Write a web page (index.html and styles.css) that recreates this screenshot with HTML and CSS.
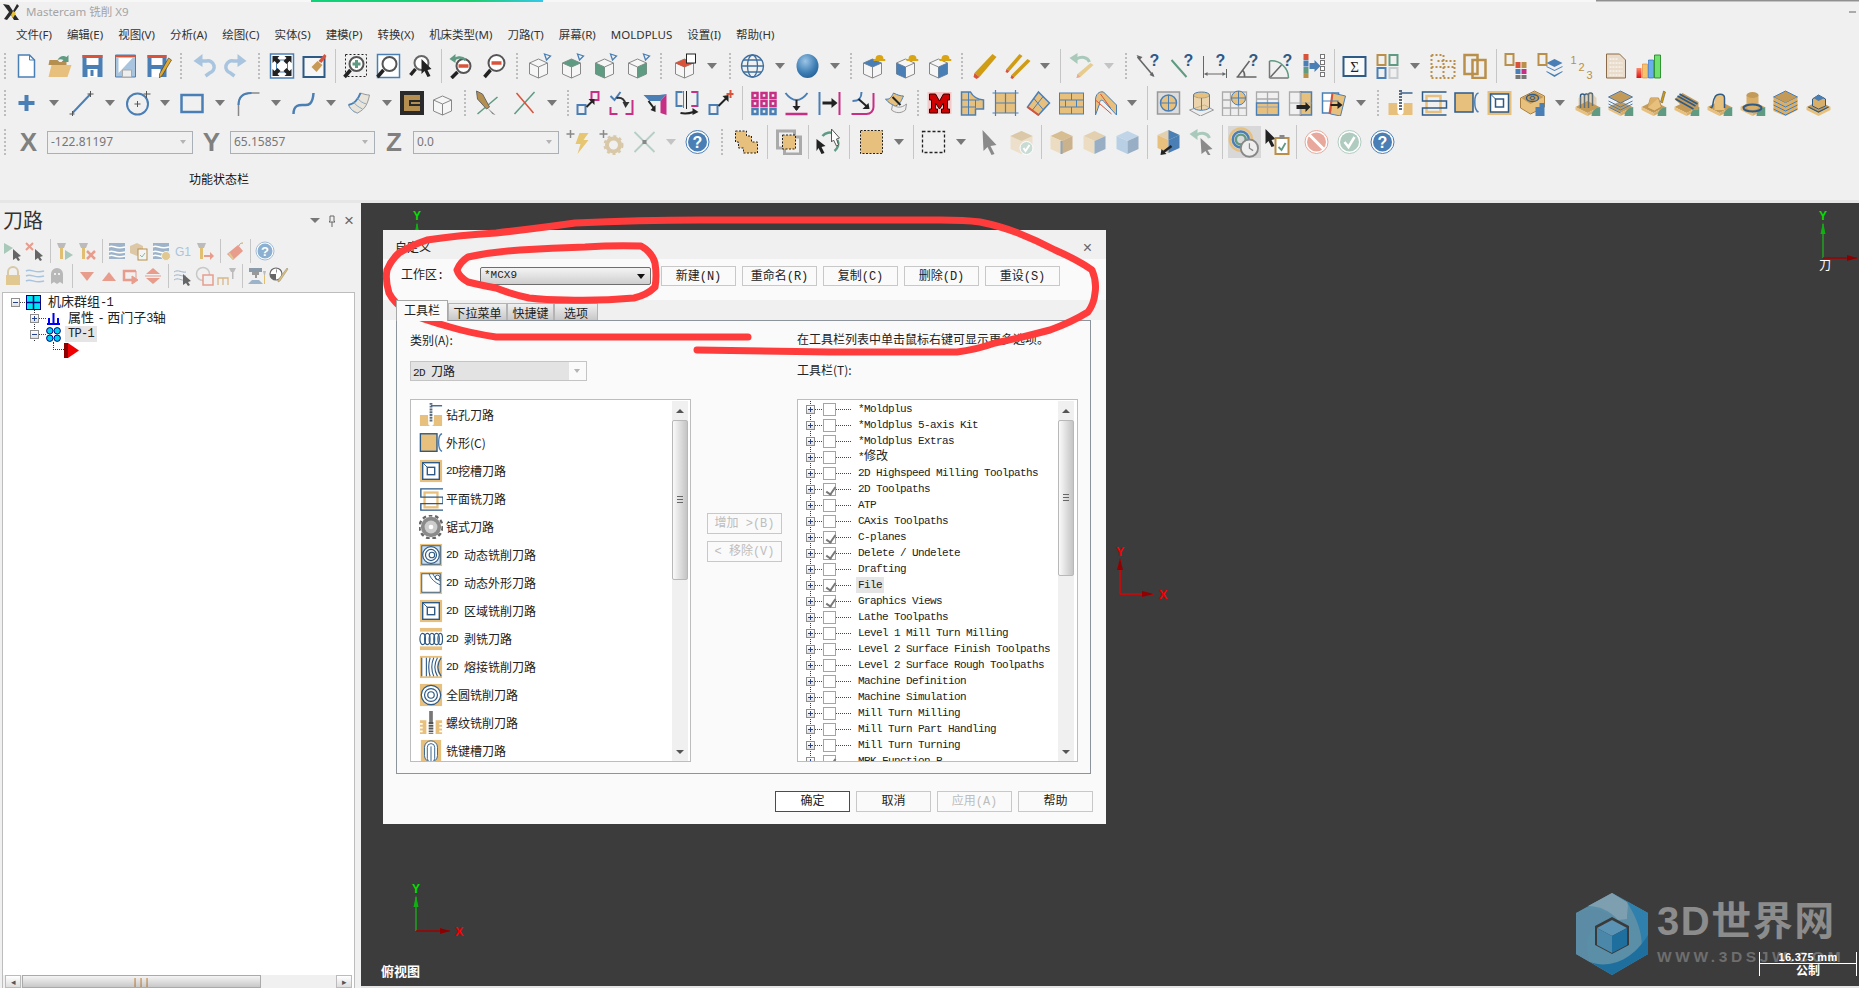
FILE: index.html
```html
<!DOCTYPE html>
<html lang="zh">
<head>
<meta charset="utf-8">
<title>Mastercam 铣削 X9</title>
<link rel="stylesheet" href="styles.css">
</head>
<body>
<svg class="sprite" xmlns="http://www.w3.org/2000/svg">
<defs>
<radialGradient id="gs" cx=".4" cy=".3" r=".8"><stop offset="0" stop-color="#9cc4e6"/><stop offset=".6" stop-color="#3f7fb5"/><stop offset="1" stop-color="#1f5a8e"/></radialGradient>
<linearGradient id="gb" x1="0" x2="0" y1="0" y2="1"><stop offset="0" stop-color="#ff8a6a"/><stop offset="1" stop-color="#e01010"/></linearGradient>
</defs>
<symbol id="new" viewBox="0 0 26 26"><path d="M5 2h11l5 5v17H5z" fill="#fff" stroke="#4a7fb5" stroke-width="1.5"/><path d="M16 2v5h5" fill="none" stroke="#4a7fb5"/></symbol>
<symbol id="open" viewBox="0 0 26 26"><path d="M2 12l1-5h8l2 2h7v3z" fill="#b48f4f"/><path d="M5 12h20l-4 12H2z" fill="#e8c07d"/><path d="M11 7c2-4 6-5 9-3l2-2v7h-7l2-2c-2-1-4-1-6 0z" fill="#5f9a82"/></symbol>
<symbol id="save" viewBox="0 0 26 26"><path d="M3 2h20v22H3z" fill="#4a7fb5"/><path d="M3 2h20v3H3z" fill="#d9533a"/><path d="M7 5h12v7H7z" fill="#fff"/><path d="M8 16h10v8H8z" fill="#fff"/><path d="M11 17h3v6h-3z" fill="#4a7fb5"/></symbol>
<symbol id="saveas" viewBox="0 0 26 26"><path d="M3 2h20v22H3z" fill="#a9c4de" stroke="#4a7fb5"/><path d="M3 2h20v2H3z" fill="#d9533a"/><path d="M6 5h14L6 20z" fill="#fff"/><path d="M10 17h9v7h-9z" fill="#eee" stroke="#aaa"/></symbol>
<symbol id="savep" viewBox="0 0 26 26"><path d="M2 2h19v22H2z" fill="#4a7fb5"/><path d="M2 2h19v3H2z" fill="#d9533a"/><path d="M6 5h11v7H6z" fill="#fff"/><path d="M6 16h9v8H6z" fill="#fff"/><path d="M23 5l3 2-9 15-3 3 0-4z" fill="#e0a92e" stroke="#333" stroke-width=".6"/></symbol>
<symbol id="undo" viewBox="0 0 26 26"><path d="M11 8h5a6 6 0 0 1 3 12l-4 3" fill="none" stroke="#a9c4de" stroke-width="3.5"/><path d="M12 1v13L3 8z" fill="#a9c4de"/></symbol>
<symbol id="redo" viewBox="0 0 26 26"><g transform="matrix(-1 0 0 1 26 0)"><path d="M11 8h5a6 6 0 0 1 3 12l-4 3" fill="none" stroke="#a9c4de" stroke-width="3.5"/><path d="M12 1v13L3 8z" fill="#a9c4de"/></g></symbol>
<symbol id="fit" viewBox="0 0 26 26"><rect x="2" y="1" width="23" height="24" fill="#fff" stroke="#4a7fb5" stroke-width="1.5"/><rect x="8" y="7" width="11" height="12" fill="none" stroke="#4a7fb5"/><path d="M4 3h7L9 5l3 3-3 3-3-3-2 2zM23 3v7l-2-2-3 3-3-3 3-3-2-2zM4 23v-7l2 2 3-3 3 3-3 3 2 2zM23 23h-7l2-2-3-3 3-3 3 3 2-2z" fill="#222"/></symbol>
<symbol id="paint" viewBox="0 0 26 26"><rect x="2" y="4" width="21" height="20" fill="#f6f6f6" stroke="#2e5a86" stroke-width="2"/><path d="M10 14l6-6 5 4-6 7z" fill="#c99a55"/><path d="M17 8l6-7 2 2-5 7z" fill="#d9533a"/></symbol>
<symbol id="zw" viewBox="0 0 26 26"><rect x="3" y="1.500" width="21" height="22" fill="none" stroke="#222" stroke-dasharray="2 2"/><circle cx="14" cy="11" r="7" fill="#fff" stroke="#555" stroke-width="2"/><path d="M14 7v8M10 11h8" stroke="#5f9a82" stroke-width="3"/><path d="M8 17l-6 7" stroke="#222" stroke-width="3.5"/></symbol>
<symbol id="zs" viewBox="0 0 26 26"><rect x="2" y="1.500" width="22" height="23" fill="#fff" stroke="#4a7fb5" stroke-width="1.5"/><circle cx="14" cy="11" r="7" fill="#fff" stroke="#555" stroke-width="2"/><path d="M8 17l-6 7" stroke="#222" stroke-width="3.500"/></symbol>
<symbol id="zc" viewBox="0 0 26 26"><circle cx="13" cy="10" r="7" fill="#fff" stroke="#666" stroke-width="2"/><path d="M7 16l-5 6" stroke="#222" stroke-width="3.500"/><path d="M13 6l10 10-4 1 3 6-3 1-3-6-3 3z" fill="#222"/></symbol>
<symbol id="zp" viewBox="0 0 26 26"><circle cx="15" cy="13" r="7" fill="#fff" stroke="#555" stroke-width="2"/><path d="M10 13h10" stroke="#d9533a" stroke-width="3.500"/><path d="M9 19l-6 6" stroke="#222" stroke-width="3.500"/><path d="M5 8c2-4 8-5 12-1" fill="none" stroke="#5f9a82" stroke-width="2.500"/><path d="M7 1v9L1 6z" fill="#5f9a82"/></symbol>
<symbol id="zo" viewBox="0 0 26 26"><circle cx="15" cy="10" r="8" fill="#fff" stroke="#555" stroke-width="2"/><path d="M10 10h10" stroke="#d9533a" stroke-width="3.500"/><path d="M9 17l-6 7" stroke="#222" stroke-width="3.500"/></symbol>
<symbol id="cw" viewBox="0 0 26 26"><path d="M13 6l9 4v11l-9 4-9-4V10z" fill="#f6f6f6" stroke="#888"/><path d="M4 10l9 4 9-4M13 14v11" stroke="#888" fill="none"/></symbol>
<symbol id="c1" viewBox="0 0 26 26"><use href="#cw"/><path d="M19 1l6 2-4 4z" fill="none" stroke="#4a7fb5" stroke-width="1.300"/></symbol>
<symbol id="c2" viewBox="0 0 26 26"><use href="#cw"/><path d="M13 6l9 4-9 4-9-4z" fill="#5f9a82"/><path d="M19 1l6 2-4 4z" fill="#f0f0f0" stroke="#4a7fb5" stroke-width="1.300"/></symbol>
<symbol id="c3" viewBox="0 0 26 26"><use href="#cw"/><path d="M4 10l9 4v11l-9-4z" fill="#5f9a82"/><path d="M19 1l6 2-4 4z" fill="#f0f0f0" stroke="#4a7fb5" stroke-width="1.300"/></symbol>
<symbol id="c4" viewBox="0 0 26 26"><use href="#cw"/><path d="M22 10l-9 4v11l9-4z" fill="#5f9a82"/><path d="M19 1l6 2-4 4z" fill="#f0f0f0" stroke="#4a7fb5" stroke-width="1.300"/></symbol>
<symbol id="cr" viewBox="0 0 26 26"><use href="#cw"/><path d="M13 6l9 4-9 4-9-4z" fill="#d9533a"/><path d="M4 10l9 4V8z" fill="#d9533a"/><rect x="15" y="1" width="9" height="9" fill="#fff" stroke="#222"/></symbol>
<symbol id="glb" viewBox="0 0 26 26"><g fill="none" stroke="#3f6f9f" stroke-width="1.300"><circle cx="13" cy="13" r="11"/><ellipse cx="13" cy="13" rx="5" ry="11"/><path d="M2 13h22M4 7h18M4 19h18"/></g></symbol>
<symbol id="sph" viewBox="0 0 26 26"><ellipse cx="13" cy="13" rx="11" ry="12" fill="url(#gs)"/></symbol>
<symbol id="hat" viewBox="0 0 26 26"><path d="M16 6a4 4 0 0 1 8 0h2v2H14V6z" fill="#d9a514"/></symbol>
<symbol id="h1" viewBox="0 0 26 26"><use href="#cw"/><path d="M13 6l9 4-9 4-9-4z" fill="#4a7fb5"/><use href="#hat"/></symbol>
<symbol id="h2" viewBox="0 0 26 26"><use href="#cw"/><path d="M4 10l9 4v11l-9-4z" fill="#4a7fb5"/><use href="#hat"/></symbol>
<symbol id="h3" viewBox="0 0 26 26"><use href="#cw"/><path d="M22 10l-9 4v11l9-4z" fill="#4a7fb5"/><use href="#hat"/></symbol>
<symbol id="pen" viewBox="0 0 26 26"><path d="M21 1l4 3L8 24l-5-4z" fill="#cf9c14"/><path d="M3 20l5 4-3 2-3-2z" fill="#d9533a"/></symbol>
<symbol id="pen2" viewBox="0 0 26 26"><path d="M15 1l3 2L5 18l-3-2z" fill="#cf9c14"/><path d="M23 6l3 2L10 24l-3-2z" fill="#cf9c14"/><path d="M2 16l3 2-2 2-2-1zM7 22l3 2-2 2-2-1z" fill="#d9533a"/></symbol>
<symbol id="upen" viewBox="0 0 26 26"><path d="M8 6c5-3 11-2 13 3" fill="none" stroke="#a9c9bb" stroke-width="3"/><path d="M9 0v11L1 5z" fill="#a9c9bb"/><path d="M22 10l3 2-13 12-4 1 1-4z" fill="#e6cd8f"/><path d="M8 25l1-4 3 3z" fill="#e8a8a0"/></symbol>
<symbol id="m1" viewBox="0 0 26 26"><path d="M2 4l16 19" stroke="#666" stroke-width="1.600"/><path d="M1 2l6 2-3 3zM19 24l-5-2 3-3z" fill="#666"/><text x="14" y="13" font-size="16" font-weight="700" fill="#2e5a86" font-family="Liberation Sans">?</text></symbol>
<symbol id="m2" viewBox="0 0 26 26"><path d="M3 7l15 17" stroke="#5f9a82" stroke-width="2"/><text x="15" y="13" font-size="16" font-weight="700" fill="#2e5a86" font-family="Liberation Sans">?</text></symbol>
<symbol id="m3" viewBox="0 0 26 26"><path d="M2 3v22M25 16v9M3 21h21" stroke="#666" fill="none"/><path d="M3 21l3-2v4zM24 21l-3-2v4z" fill="#666"/><text x="14" y="13" font-size="16" font-weight="700" fill="#2e5a86" font-family="Liberation Sans">?</text></symbol>
<symbol id="m4" viewBox="0 0 26 26"><path d="M2 24h20M3 24L15 8M10 24a8 8 0 0 0-2-7" stroke="#666" stroke-width="1.500" fill="none"/><text x="14" y="13" font-size="16" font-weight="700" fill="#2e5a86" font-family="Liberation Sans">?</text></symbol>
<symbol id="m5" viewBox="0 0 26 26"><path d="M2 25V8M2 25h19" stroke="#777" stroke-width="1.500"/><path d="M2 8a17 17 0 0 1 19 17" fill="none" stroke="#5f9a82" stroke-width="1.500"/><path d="M3 24L14 12" stroke="#666" stroke-width="1.500"/><text x="15" y="13" font-size="16" font-weight="700" fill="#2e5a86" font-family="Liberation Sans">?</text></symbol>
<symbol id="lst" viewBox="0 0 26 26"><path d="M3 1h5v6H3z" fill="#d9533a"/><path d="M3 7.500h5v6H3z" fill="#4a7fb5"/><path d="M3 14h5v6H3z" fill="#5f9a82"/><path d="M3 20h5v5H3z" fill="#b98f4a"/><path d="M9 10h5V7l6 6-6 6v-3H9z" fill="#4a7fb5"/><g fill="#fff" stroke="#777"><rect x="20" y="1.500" width="4" height="4"/><rect x="20" y="7.500" width="4" height="4"/><rect x="20" y="13.500" width="4" height="4"/><rect x="20" y="19.500" width="4" height="4"/></g></symbol>
<symbol id="sig" viewBox="0 0 26 26"><rect x="2" y="4" width="22" height="19" fill="#fafafa" stroke="#2e5a86" stroke-width="2"/><text x="13" y="19" text-anchor="middle" font-size="15" fill="#222" font-family="Liberation Serif">Σ</text></symbol>
<symbol id="vb" viewBox="0 0 26 26"><g fill="none" stroke-width="2"><rect x="3" y="2" width="8" height="10" stroke="#b98f4a"/><rect x="15" y="2" width="8" height="10" stroke="#5f9a82"/><rect x="3" y="15" width="8" height="10" stroke="#4a7fb5"/><rect x="15" y="15" width="8" height="10" stroke="#c7ccd0"/></g></symbol>
<symbol id="dts" viewBox="0 0 26 26"><g fill="none" stroke="#b98f4a" stroke-width="2" stroke-dasharray="2 2"><path d="M2 2h12M2 2v24M2 14h24M2 25h24M25 10v16M14 2v24M8 8h18"/></g></symbol>
<symbol id="ov" viewBox="0 0 26 26"><g fill="none" stroke="#b98f4a" stroke-width="2.500"><rect x="2" y="2" width="13" height="19"/><rect x="10" y="7" width="13" height="18"/></g></symbol>
<symbol id="colb" viewBox="0 0 26 26"><rect x="2" y="1" width="8" height="11" fill="none" stroke="#b98f4a" stroke-width="2"/><path d="M12 9h5v6h-5z" fill="#d9533a"/><path d="M18 9h5v6h-5z" fill="#b98f4a"/><path d="M12 16h5v5h-5z" fill="#4a7fb5"/><path d="M18 16h5v5h-5z" fill="#c62f84"/><path d="M12 22h5v4h-5z" fill="#777"/><path d="M18 22h5v4h-5z" fill="#777"/></symbol>
<symbol id="stk" viewBox="0 0 26 26"><rect x="2" y="1" width="8" height="11" fill="none" stroke="#b98f4a" stroke-width="2"/><path d="M18 6l8 4-8 4-8-4zM10 13l8 4 8-4v1l-8 4-8-4zM10 18l8 4 8-4v1l-8 5-8-5z" fill="#4a7fb5"/></symbol>
<symbol id="n123" viewBox="0 0 26 26"><g font-family="Liberation Sans" font-size="11" fill="#b98f4a"><text x="1" y="11">1</text><text x="9" y="18">2</text><text x="17" y="26">3</text></g></symbol>
<symbol id="doc" viewBox="0 0 26 26"><path d="M4 1h13l6 6v18H4z" fill="#eadccb" stroke="#8b6b47"/><path d="M7 6h8M7 10h13M7 14h13M7 18h13M7 22h13" stroke="#fff" stroke-dasharray="2 1"/></symbol>
<symbol id="chart" viewBox="0 0 26 26"><path d="M1 15h5v10H1z" fill="url(#gb)"/><path d="M7 11h5v14H7z" fill="#f5c46a" stroke="#e08030" stroke-width=".6"/><path d="M13 7h5v18h-5z" fill="#6ab0e8" stroke="#2060c0" stroke-width=".6"/><path d="M19 2h6v23h-6z" fill="#70e070" stroke="#108010" stroke-width=".8"/></symbol>
<symbol id="pls" viewBox="0 0 26 26"><path d="M13 5v16M5 13h16" stroke="#4a7fb5" stroke-width="4"/></symbol>
<symbol id="lin" viewBox="0 0 26 26"><path d="M4 23L22 4" stroke="#4a7fb5" stroke-width="2"/><path d="M22 1v6M19 4h6M4 21v5M1 24h5" stroke="#555"/></symbol>
<symbol id="cir" viewBox="0 0 26 26"><circle cx="13" cy="14" r="10.500" fill="none" stroke="#4a7fb5" stroke-width="2"/><path d="M13 11v6M10 14h6M22 1v7M19 4h7" stroke="#555"/></symbol>
<symbol id="rct" viewBox="0 0 26 26"><rect x="2" y="5" width="21" height="17" fill="none" stroke="#4a7fb5" stroke-width="2.500"/></symbol>
<symbol id="fil" viewBox="0 0 26 26"><path d="M3 26V15C3 7 8 3 16 3h8" fill="none" stroke="#888" stroke-width="1.500"/><path d="M3 15C3 7 8 3 16 3" fill="none" stroke="#4a7fb5" stroke-width="2"/></symbol>
<symbol id="spl" viewBox="0 0 26 26"><path d="M3 24c0-10 7-9 10-9s9 2 10-12" fill="none" stroke="#4a7fb5" stroke-width="2.500"/></symbol>
<symbol id="srf" viewBox="0 0 26 26"><path d="M3 15c5-1 9-4 12-12 3 1 6 2 9 2-2 9-4 14-12 18-3-1-6-2-9-8z" fill="#e9e4da" stroke="#999"/><path d="M3 15c5-1 9-4 12-12" fill="none" stroke="#4a7fb5" stroke-width="2"/><path d="M12 23c-3-1-6-2-9-8M8 12c2 3 5 5 9 7M12 8c2 3 5 5 9 6" fill="none" stroke="#8aa9c9"/></symbol>
<symbol id="elogo" viewBox="0 0 26 26"><rect x="1" y="1" width="24" height="24" fill="#2a2a2a"/><path d="M5 5h16v5H10v6h11v5H5z" fill="#b48f4f"/><path d="M12 12h9v2h-9z" fill="#b48f4f"/></symbol>
<symbol id="knf" viewBox="0 0 26 26"><path d="M3 24l20-17" stroke="#5f9a82" stroke-width="1.500"/><path d="M2 1l6 3 7 13-3 2L3 9z" fill="#b48f4f" stroke="#666"/><path d="M13 18l8 7-3-1z" fill="#777"/></symbol>
<symbol id="xln" viewBox="0 0 26 26"><path d="M3 24L23 2" stroke="#5f9a82" stroke-width="1.500"/><path d="M5 3l17 20" stroke="#d9533a" stroke-width="1.500"/></symbol>
<symbol id="t1" viewBox="0 0 26 26"><rect x="2" y="15" width="8" height="9" fill="none" stroke="#4a7fb5" stroke-width="2"/><rect x="16" y="2" width="7" height="8" fill="none" stroke="#c62f84" stroke-width="2"/><path d="M11 17l6-6" stroke="#222" stroke-width="2"/><path d="M19 9v6l-6-6z" fill="#222"/></symbol>
<symbol id="t2" viewBox="0 0 26 26"><path d="M2 6l4 4 6-8" fill="none" stroke="#4a7fb5" stroke-width="2"/><path d="M2 17v7h7M24 10v14h-7" fill="none" stroke="#c62f84" stroke-width="2"/><path d="M8 8c5-1 8 2 9 6" fill="none" stroke="#333" stroke-width="2"/><path d="M14 12h7l-4 6z" fill="#333"/></symbol>
<symbol id="t3" viewBox="0 0 26 26"><path d="M2 5h16l7-1-6 7H8z" fill="#4a7fb5"/><path d="M25 4v21l-6-2V11z" fill="#c62f84"/><path d="M7 11l6 8" stroke="#222" stroke-width="2"/><path d="M14 22l-5-2 5-5z" fill="#222"/></symbol>
<symbol id="t4" viewBox="0 0 26 26"><path d="M8 2H2v14h6M17 2h6v14h-6" fill="none" stroke="#4a7fb5" stroke-width="2"/><path d="M17 2h6M17 16h6" stroke="#c62f84" stroke-width="2"/><path d="M12 1v18" stroke="#222"/><path d="M9 1v17" stroke="#777"/><path d="M6 23c5 1 10 0 13-1" fill="none" stroke="#222" stroke-width="2"/><path d="M18 18l6 4-6 3z" fill="#222"/></symbol>
<symbol id="t5" viewBox="0 0 26 26"><rect x="2" y="15" width="8" height="9" fill="none" stroke="#4a7fb5" stroke-width="2"/><path d="M11 16l8-8" stroke="#222" stroke-width="2"/><path d="M21 5v7l-6-6z" fill="#222"/><path d="M23 0v8M19 4h7" stroke="#d9533a" stroke-width="2"/></symbol>
<symbol id="g1" viewBox="0 0 26 26"><g fill="none" stroke-width="2.500"><rect x="2" y="3" width="5" height="5" stroke="#c62f84"/><rect x="11" y="3" width="5" height="5" stroke="#c62f84"/><rect x="20" y="3" width="5" height="5" stroke="#c62f84"/><rect x="2" y="11" width="5" height="5" stroke="#c62f84"/><rect x="11" y="11" width="5" height="5" stroke="#c62f84"/><rect x="20" y="11" width="5" height="5" stroke="#c62f84"/><rect x="2" y="19" width="5" height="5" stroke="#4a7fb5"/><rect x="11" y="19" width="5" height="5" stroke="#4a7fb5"/><rect x="20" y="19" width="5" height="5" stroke="#4a7fb5"/></g></symbol>
<symbol id="g2" viewBox="0 0 26 26"><path d="M2 3c3 4 7 7 11 7s8-3 11-7" fill="none" stroke="#4a7fb5" stroke-width="2"/><path d="M13 10v10" stroke="#222" stroke-width="2"/><path d="M9 16h8l-4 5z" fill="#222"/><path d="M2 24h22" stroke="#c62f84" stroke-width="2.500"/></symbol>
<symbol id="g3" viewBox="0 0 26 26"><path d="M3 2v23" stroke="#4a7fb5" stroke-width="2"/><path d="M23 2v23" stroke="#c62f84" stroke-width="2"/><path d="M6 13h10" stroke="#222" stroke-width="3"/><path d="M15 8l6 5-6 5z" fill="#222"/></symbol>
<symbol id="g4" viewBox="0 0 26 26"><path d="M12 2c0 6-2 9-9 9" fill="none" stroke="#4a7fb5" stroke-width="2"/><path d="M24 3v14c0 4-3 7-7 7H2" fill="none" stroke="#c62f84" stroke-width="2"/><path d="M9 9l9 8" stroke="#222" stroke-width="2"/><path d="M20 19h-7l6-6z" fill="#222"/></symbol>
<symbol id="g5" viewBox="0 0 26 26"><path d="M3 9c4 1 6-2 8-6 4 2 7 3 10 3-2 4-3 8-8 10-3-1-7-3-10-7z" fill="#e8c07d" stroke="#4a7fb5"/><path d="M10 15c4 2 8 4 14-1l-1 6c-5 4-10 3-14 0z" fill="#eee" stroke="#999"/><path d="M10 7l8 8" stroke="#222" stroke-width="2"/></symbol>
<symbol id="mm" viewBox="0 0 26 26"><rect x="1" y="2" width="24" height="22" fill="#f2c8c8"/><path d="M3 4h6l4 7 4-7h6v6h-2v9h2v4h-8v-4h2v-6l-4 6-4-6v6h2v4H3v-4h2v-9H3z" fill="#d00000" stroke="#300" stroke-width="1"/></symbol>
<symbol id="a1" viewBox="0 0 26 26"><path d="M2 2h9c2 4 5 7 13 8v9h-8v6H2z" fill="#e8c07d" stroke="#4a7fb5" stroke-width="1.500"/><path d="M2 10h18M2 17h14M9 2v23M16 10v8" stroke="#4a7fb5" fill="none"/></symbol>
<symbol id="a2" viewBox="0 0 26 26"><rect x="3" y="3" width="20" height="20" fill="#e8c07d"/><path d="M0 3h26M0 23h26M3 0v26M23 0v26M13 3v20M3 13h20" stroke="#4a7fb5" stroke-width="1.200"/></symbol>
<symbol id="a3" viewBox="0 0 26 26"><path d="M13 2l11 11-11 12L2 17z" fill="#e8c07d" stroke="#4a7fb5" stroke-width="1.500"/><path d="M8 8l10 12M18 6L7 20" stroke="#4a7fb5"/><path d="M2 17l11 8" stroke="#d9533a" stroke-width="2"/></symbol>
<symbol id="a4" viewBox="0 0 26 26"><rect x="1" y="3" width="24" height="21" fill="#e8c07d" stroke="#4a7fb5"/><path d="M1 10h24M1 17h24M13 3v7M7 10v7M18 10v7M13 17v7" stroke="#4a7fb5"/></symbol>
<symbol id="a5" viewBox="0 0 26 26"><path d="M4 25V10C4 4 8 1 12 2l13 13v10L13 12C10 9 8 10 8 14z" fill="#e8c07d" stroke="#4a7fb5"/><path d="M4 25V10M9 4l10 14M4 10l16 14" stroke="#d9533a"/></symbol>
<symbol id="b1" viewBox="0 0 26 26"><rect x="2" y="2" width="22" height="22" fill="#ddd" stroke="#999" stroke-width="1.500"/><circle cx="13" cy="13" r="8" fill="#e8c07d" stroke="#4a7fb5" stroke-width="1.500"/><path d="M13 5v16M5 13h16" stroke="#4a7fb5"/></symbol>
<symbol id="b2" viewBox="0 0 26 26"><path d="M1 20l15-5 9 5-13 6z" fill="#eee" stroke="#999"/><ellipse cx="13" cy="5" rx="8" ry="3" fill="#e8c07d" stroke="#4a7fb5"/><path d="M5 5v13c3 3 12 3 16 0V5" fill="#e8c07d" fill-opacity=".6" stroke="#4a7fb5"/><path d="M13 8v12" stroke="#4a7fb5"/></symbol>
<symbol id="b3" viewBox="0 0 26 26"><path d="M1 2h24v24H1z" fill="#eee"/><path d="M1 2h24v24H1zM1 10h24M1 18h24M9 2v24M17 2v24" fill="none" stroke="#aaa" stroke-width="1.300"/><circle cx="17" cy="8" r="7" fill="#e8c07d" stroke="#4a7fb5"/><path d="M17 1v14M10 8h14" stroke="#4a7fb5"/></symbol>
<symbol id="b4" viewBox="0 0 26 26"><path d="M2 2h22v23H2z" fill="#f0f0f0"/><path d="M2 13h22v12H2z" fill="#e8c07d"/><path d="M2 2h22v23H2zM2 9h22M2 17h22M13 2v23" fill="none" stroke="#aaa" stroke-width="1.300"/><path d="M2 13h22v12H2z" fill="none" stroke="#4a7fb5" stroke-width="1.300"/></symbol>
<symbol id="b5" viewBox="0 0 26 26"><path d="M2 2h12v23H2z" fill="#f0f0f0" stroke="#aaa" stroke-width="1.300"/><path d="M13 2h11v23H13z" fill="#e8c07d" stroke="#4a7fb5" stroke-width="1.500"/><path d="M2 13h22M13 2v23" stroke="#aaa"/><path d="M9 15h9v-3l5 5-5 5v-3H9z" fill="#222"/></symbol>
<symbol id="b6" viewBox="0 0 26 26"><path d="M2 3h16v20H2z" fill="#fff" stroke="#4a7fb5" stroke-width="1.500"/><path d="M12 3l13 3-5 20-10-2z" fill="#e8c07d" stroke="#4a7fb5"/><path d="M12 3l-3 21" stroke="#d9533a" stroke-width="2"/><path d="M2 11h16" stroke="#4a7fb5"/><path d="M10 14h7v-3l5 4-5 4v-3h-7z" fill="#222"/></symbol>
<symbol id="drl" viewBox="0 0 26 26"><path d="M1 13h9v5h6v-5h9v12H1z" fill="#e8c07d"/><path d="M10 10a3 3 0 0 0 0 0v12a3 3 0 0 0 6 0V10z" fill="#fff"/><path d="M13 0v21" stroke="#5a6d80" stroke-width="3" stroke-dasharray="2 1"/><path d="M13 3h12" stroke="#2e5a86" stroke-width="1.400"/></symbol>
<symbol id="fac" viewBox="0 0 26 26"><rect x="6" y="6" width="14" height="16" fill="none" stroke="#e8c07d" stroke-width="2.500"/><path d="M26 2H2v9h24v7H2v7h24" fill="none" stroke="#2e5a86" stroke-width="1.500"/></symbol>
<symbol id="con" viewBox="0 0 26 26"><rect x="1.500" y="3" width="18" height="19" fill="#e8c07d" stroke="#2e5a86" stroke-width="1.500"/><path d="M25 3c-5 1-5 17 0 19" fill="none" stroke="#4a7fb5" stroke-width="1.500"/></symbol>
<symbol id="poc" viewBox="0 0 26 26"><rect x="1" y="1" width="24" height="24" fill="#e8c07d"/><rect x="4" y="4" width="18" height="18" fill="#fff" stroke="#2e5a86" stroke-width="1.500"/><rect x="9" y="9" width="8" height="8" fill="none" stroke="#2e5a86" stroke-width="1.500"/><path d="M4 4l5 5" stroke="#2e5a86"/></symbol>
<symbol id="spi" viewBox="0 0 26 26"><path d="M1 8l14-7 10 5v11L11 24 1 18z" fill="#e8c07d" stroke="#a98040"/><path d="M2 8l13-6 9 5-13 7z" fill="#c49a58"/><ellipse cx="13" cy="8" rx="6" ry="3.500" fill="none" stroke="#2e5a86" stroke-width="1.300"/><ellipse cx="13" cy="8" rx="2.500" ry="1.500" fill="none" stroke="#2e5a86"/><path d="M16 17h4v-4h5v13h-9z" fill="#4a7fb5"/></symbol>
<symbol id="blk" viewBox="0 0 26 26"><path d="M1 17l12-6 12 6-12 6z" fill="#c49a58"/><path d="M1 17v3l12 6v-3z" fill="#e8c07d"/><path d="M25 17v3l-12 6v-3z" fill="#d8ae68"/><path d="M26 26h-9a9 9 0 0 1 9-9z" fill="#5f9a82"/></symbol>
<symbol id="k1" viewBox="0 0 26 26"><use href="#blk"/><path d="M6 18V6a2 2 0 0 1 4 0v12V6a2 2 0 0 1 4 0v12V5a2 2 0 0 1 4 0v11" fill="none" stroke="#2e5a86" stroke-width="1.500"/><path d="M4 19V8l12-6 6 6v9z" fill="#c49a58" opacity=".35"/></symbol>
<symbol id="k2" viewBox="0 0 26 26"><use href="#blk"/><path d="M1 7l12-6 12 6-12 6z" fill="#c49a58" stroke="#4a7fb5"/><path d="M1 11l12 6 12-6M1 14l12 6 12-6M1 17l12 6" fill="none" stroke="#4a7fb5"/></symbol>
<symbol id="k3" viewBox="0 0 26 26"><use href="#blk"/><path d="M7 18l3-10h8l3 9-7 4z" fill="#e8c07d" stroke="#b98f4a"/><path d="M7 18l3-10 8 0" fill="#d8ae68"/><path d="M23 1l2 1-3 11-2-1z" fill="#cf9c14" stroke="#333" stroke-width=".4"/></symbol>
<symbol id="k4" viewBox="0 0 26 26"><use href="#blk"/><path d="M1 9l8-6 16 9v8L13 20z" fill="#c49a58"/><path d="M4 6l18 10M6 4l18 10M2 9l18 10" stroke="#2e5a86" stroke-width="1.500"/></symbol>
<symbol id="k5" viewBox="0 0 26 26"><use href="#blk"/><path d="M8 20V8c0-5 10-5 10 0v12z" fill="#e8c07d"/><path d="M4 17c3 3 2-7 4-9 2-5 10-5 10 0v10" fill="none" stroke="#2e5a86" stroke-width="1.500"/></symbol>
<symbol id="k6" viewBox="0 0 26 26"><use href="#blk"/><path d="M7 5v12c0 4 12 4 12 0V5z" fill="#d8ae68"/><ellipse cx="13" cy="5" rx="6" ry="3" fill="#c49a58"/><ellipse cx="13" cy="18" rx="9" ry="3.500" fill="none" stroke="#2e5a86" stroke-width="2"/></symbol>
<symbol id="k7" viewBox="0 0 26 26"><path d="M1 7l12-6 12 6-12 6z" fill="#c49a58" stroke="#4a7fb5"/><path d="M1 7v14l12 5 12-6V7l-12 6z" fill="#d8ae68"/><path d="M1 11l12 6 12-6M1 15l12 6 12-6M1 19l12 6 12-6" fill="none" stroke="#4a7fb5"/></symbol>
<symbol id="k8" viewBox="0 0 26 26"><path d="M1 17l12-6 12 6-12 6z" fill="#c49a58"/><path d="M1 17v3l12 6 12-6v-3l-12 6z" fill="#e8c07d"/><path d="M7 9l6-4 7 4v7l-7 3-6-3z" fill="#d8ae68" stroke="#2e5a86"/><path d="M8 8l5-3 6 3-6 3z" fill="#4a7fb5"/><path d="M3 17l10 5 10-5" fill="none" stroke="#2e5a86" stroke-width="1.300"/></symbol>
<symbol id="bolt" viewBox="0 0 26 26"><path d="M1 5h8M5 1v8" stroke="#888" stroke-width="1.500"/><path d="M14 4h9l-5 7h5L12 25l3-10h-5z" fill="#e6c670"/></symbol>
<symbol id="gear" viewBox="0 0 26 26"><path d="M1 5h8M5 1v8" stroke="#888" stroke-width="1.500"/><circle cx="15" cy="16" r="6.500" fill="none" stroke="#d8c8a8" stroke-width="4"/><circle cx="15" cy="16" r="9" fill="none" stroke="#d8c8a8" stroke-width="2" stroke-dasharray="3 3"/></symbol>
<symbol id="xg" viewBox="0 0 26 26"><path d="M3 3l20 20M23 3L3 23" stroke="#b5cfc4" stroke-width="1.800"/><rect x="11" y="11" width="4" height="4" fill="#888"/></symbol>
<symbol id="hlp" viewBox="0 0 26 26"><circle cx="13" cy="13" r="11.500" fill="#fff" stroke="#4a7fb5"/><circle cx="13" cy="13" r="9.500" fill="#4a7fb5"/><text x="13" y="19" text-anchor="middle" font-size="16" font-weight="700" fill="#fff" font-family="Liberation Sans">?</text></symbol>
<symbol id="tn1" viewBox="0 0 26 26"><path d="M2 2h11v5h5v6h6v11H10v-5H5v-6H2z" fill="#e8c07d" stroke="#222" stroke-dasharray="2 1.500"/></symbol>
<symbol id="tn2" viewBox="0 0 26 26"><rect x="2" y="2" width="17" height="17" fill="none" stroke="#aaa" stroke-width="3"/><rect x="9" y="8" width="16" height="17" fill="#f0f0f0" stroke="#aaa" stroke-width="3"/><rect x="7" y="6" width="13" height="14" fill="#e8c07d" stroke="#222" stroke-dasharray="2 1.500"/></symbol>
<symbol id="cyc" viewBox="0 0 26 26"><path d="M7 7a9 9 0 0 1 12-2M19 22a9 9 0 0 0 3-11" fill="none" stroke="#5f9a82" stroke-width="2.500"/><path d="M1 10l9 7-4 1 3 6-3 1-3-6-2 3z" fill="#222"/><path d="M16 0l8 9-3 1 2 6-2 1-3-6-2 2z" fill="#fff" stroke="#555"/></symbol>
<symbol id="tn3" viewBox="0 0 26 26"><rect x="2" y="1.500" width="22" height="23" fill="#e8c07d" stroke="#222" stroke-dasharray="2 1.500"/></symbol>
<symbol id="dsh" viewBox="0 0 26 26"><rect x="2" y="2.500" width="22" height="21" fill="none" stroke="#222" stroke-width="1.300" stroke-dasharray="3 2"/></symbol>
<symbol id="arw" viewBox="0 0 26 26"><path d="M7 1l14 15-6 1 4 8-3 1-4-8-4 4z" fill="#8a8a8a"/></symbol>
<symbol id="tck" viewBox="0 0 26 26"><path d="M13 2l11 5v13l-11 5-11-5V7z" fill="#ece0cc"/><path d="M2 7l11 5 11-5-11-5z" fill="#dbc8a8"/><circle cx="18" cy="19" r="6.500" fill="#c9dcd4" stroke="#fff"/><path d="M15 19l2 3 4-6" fill="none" stroke="#fff" stroke-width="2"/></symbol>
<symbol id="q1" viewBox="0 0 26 26"><path d="M13 2l11 5-11 5L2 7z" fill="#d7bd92"/><path d="M2 7l11 5v13L2 20z" fill="#ecdcc2"/><path d="M24 7l-11 5v13l11-5z" fill="#cab28c"/><path d="M12 12h2v13h-2z" fill="#8fa6bd"/></symbol>
<symbol id="q2" viewBox="0 0 26 26"><path d="M13 2l11 5-11 5L2 7z" fill="#e2d0b0"/><path d="M2 7l11 5v13L2 20z" fill="#ecdcc2"/><path d="M24 7l-11 5v13l11-5z" fill="#98aec4"/></symbol>
<symbol id="q3" viewBox="0 0 26 26"><path d="M13 2l11 5-11 5L2 7z" fill="#c0d5e8"/><path d="M2 7l11 5v13L2 20z" fill="#b8cfe4"/><path d="M24 7l-11 5v13l11-5z" fill="#98aec4"/></symbol>
<symbol id="q4" viewBox="0 0 26 26"><path d="M13 1l11 5-11 5L2 6z" fill="#e2d0b0"/><path d="M2 6l11 5v13L2 19z" fill="#e8c07d"/><path d="M24 6l-11 5v13l11-5z" fill="#4a7fb5"/><path d="M13 1l11 5-11 5z" fill="#4a7fb5"/><path d="M16 17l-8 6" stroke="#222" stroke-width="2.500"/><path d="M5 26l1-6 5 5z" fill="#222"/></symbol>
<symbol id="uar" viewBox="0 0 26 26"><path d="M8 6c5-3 11-2 13 3" fill="none" stroke="#a9c9bb" stroke-width="3"/><path d="M9 0v11L1 5z" fill="#a9c9bb"/><path d="M12 9l12 11-5 1 3 5-2 1-3-5-4 3z" fill="#8a8a8a"/></symbol>
<symbol id="tgt" viewBox="0 0 26 26"><g fill="none"><circle cx="10" cy="11" r="9" stroke="#e8c07d" stroke-width="2"/><circle cx="10" cy="11" r="6.500" stroke="#4a7fb5" stroke-width="2"/><circle cx="10" cy="11" r="4" stroke="#5f9a82" stroke-width="2"/></g><circle cx="17" cy="18" r="7" fill="#eee" stroke="#888" stroke-width="1.500"/><path d="M17 14v4l3 2" fill="none" stroke="#888"/></symbol>
<symbol id="clp" viewBox="0 0 26 26"><path d="M1 0l10 10-4 1 3 6-3 1-3-6-3 3z" fill="#222"/><rect x="11" y="9" width="13" height="16" fill="#fff" stroke="#b98f4a" stroke-width="2"/><rect x="15" y="6" width="5" height="4" fill="#888"/><path d="M14 18l3 3 4-7" fill="none" stroke="#5f9a82" stroke-width="1.800"/></symbol>
<symbol id="no" viewBox="0 0 26 26"><circle cx="13" cy="13" r="11.500" fill="#fff" stroke="#e8a89c"/><circle cx="13" cy="13" r="9.500" fill="#e8a89c"/><path d="M6 6l14 14" stroke="#fff" stroke-width="3"/></symbol>
<symbol id="ok" viewBox="0 0 26 26"><circle cx="13" cy="13" r="11.500" fill="#fff" stroke="#b0cbc0"/><circle cx="13" cy="13" r="9.500" fill="#b0cbc0"/><path d="M8 13l4 5 6-10" fill="none" stroke="#fff" stroke-width="2.500"/></symbol>
<symbol id="saw" viewBox="0 0 26 26"><circle cx="13" cy="13" r="11" fill="#8a8a8a"/><circle cx="13" cy="13" r="12.500" fill="none" stroke="#666" stroke-width="2.500" stroke-dasharray="4 3"/><circle cx="13" cy="13" r="7" fill="#ccc"/><circle cx="13" cy="13" r="2.500" fill="#fff"/></symbol>
<symbol id="dyn" viewBox="0 0 26 26"><rect x="1" y="1" width="24" height="24" fill="#e8c07d"/><rect x="3" y="3" width="20" height="20" fill="#cfe0ef" stroke="#2e5a86"/><g fill="none" stroke="#2e5a86" stroke-width="1.300"><ellipse cx="13" cy="13" rx="9" ry="9" fill="#fff"/><circle cx="13" cy="13" r="6"/><circle cx="14" cy="13" r="3"/></g></symbol>
<symbol id="dync" viewBox="0 0 26 26"><rect x="1" y="1" width="24" height="24" fill="#e8c07d"/><rect x="3" y="3" width="20" height="20" fill="#fff" stroke="#2e5a86"/><g fill="none" stroke="#2e5a86"><path d="M11 3c1 5 7 10 12 12M15 3c1 3 4 6 8 8"/><circle cx="20" cy="7" r="2.500"/></g></symbol>
<symbol id="pee" viewBox="0 0 26 26"><rect x="1" y="1" width="24" height="4" fill="#e8c07d"/><rect x="1" y="21" width="24" height="4" fill="#e8c07d"/><g fill="none" stroke="#2e5a86" stroke-width="1.300"><ellipse cx="4" cy="13" rx="3" ry="6"/><ellipse cx="9" cy="13" rx="3" ry="6"/><ellipse cx="14" cy="13" rx="3" ry="6"/><ellipse cx="19" cy="13" rx="3" ry="6"/><ellipse cx="23" cy="13" rx="2.500" ry="6"/></g></symbol>
<symbol id="ble" viewBox="0 0 26 26"><rect x="1" y="1" width="24" height="24" fill="#e8c07d"/><path d="M3 3h20c-5 6-5 14 0 20H3z" fill="#fff"/><g fill="none" stroke="#2e5a86" stroke-width="1.200"><path d="M3 3v20M8 3v20M12 3c-2 7-2 13 0 20M16 3c-3 7-3 13 0 20M20 3c-4 7-4 13 0 20M24 3c-5 7-5 13 0 20"/></g></symbol>
<symbol id="ful" viewBox="0 0 26 26"><rect x="1" y="1" width="24" height="24" fill="#e8c07d"/><g fill="none" stroke="#2e5a86" stroke-width="1.300"><circle cx="13" cy="13" r="10.500" fill="#fff"/><circle cx="13" cy="13" r="7"/><circle cx="13" cy="13" r="3.500"/></g></symbol>
<symbol id="thr" viewBox="0 0 26 26"><path d="M1 10h7v15H1zM18 10h7v15h-7z" fill="#e8c07d"/><path d="M1 14h3M1 18h3M1 22h3M22 14h3M22 18h3M22 22h3" stroke="#fff" stroke-width="2"/><path d="M13 0v12" stroke="#777" stroke-width="4"/><path d="M13 12v13" stroke="#555" stroke-width="5" stroke-dasharray="2 1"/></symbol>
<symbol id="slt" viewBox="0 0 26 26"><rect x="2" y="1" width="22" height="24" fill="#e8c07d"/><rect x="6" y="2" width="14" height="23" rx="7" fill="#fff" stroke="#2e5a86"/><rect x="9" y="5" width="8" height="20" rx="4" fill="none" stroke="#2e5a86"/><path d="M13 8v17" stroke="#2e5a86"/></symbol>
<symbol id="cur" viewBox="0 0 20 20"><path d="M10 8l8 7-3 1 2 3-2 1-2-3-3 2z" fill="#666"/></symbol>
<symbol id="tool" viewBox="0 0 20 20"><path d="M2 2h9l-2 5H4z" fill="#bbb"/><path d="M5 7h3v11H5z" fill="#e0c070"/></symbol>
<symbol id="p1" viewBox="0 0 20 20"><path d="M1 2l9 5-9 6z" fill="#a8c9ba"/><use href="#cur"/></symbol>
<symbol id="p2" viewBox="0 0 20 20"><path d="M1 2l7 7M8 2L1 9" stroke="#e89c8c" stroke-width="2"/><use href="#cur"/></symbol>
<symbol id="p3" viewBox="0 0 20 20"><use href="#tool"/><path d="M10 9l8 5-8 5z" fill="#a8c9ba"/></symbol>
<symbol id="p4" viewBox="0 0 20 20"><use href="#tool"/><path d="M10 10l8 8M18 10l-8 8" stroke="#e89c8c" stroke-width="2.500"/></symbol>
<symbol id="p5" viewBox="0 0 20 20"><rect x="2" y="2" width="16" height="16" fill="#9db3c9"/><path d="M2 6c4-3 6 3 16 0M2 11c4-3 6 3 16 0M2 15c4-3 6 3 16 0" fill="none" stroke="#fff" stroke-width="1.400"/></symbol>
<symbol id="p6" viewBox="0 0 20 20"><path d="M1 5l7-3 6 3v7l-6 3-7-3z" fill="#dcc8a6"/><rect x="9" y="8" width="9" height="11" fill="#f4f4f4" stroke="#b98f4a"/><path d="M11 14l2 2 3-4" fill="none" stroke="#8abba6"/></symbol>
<symbol id="p7" viewBox="0 0 20 20"><use href="#p5"/><circle cx="15" cy="15" r="4.500" fill="#e0c890" stroke="#f0f0f0"/></symbol>
<symbol id="p8" viewBox="0 0 20 20"><text x="10" y="15" text-anchor="middle" font-size="12" fill="#a9c4de" font-family="Liberation Sans">G1</text></symbol>
<symbol id="p9" viewBox="0 0 20 20"><use href="#tool"/><path d="M9 14h6v-3l4 4-4 4v-3H9z" fill="#e89c8c"/></symbol>
<symbol id="p10" viewBox="0 0 20 20"><path d="M2 13l11-9 5 6-10 9z" fill="#e89c8c"/><path d="M4 12l4 6" stroke="#e0c890" stroke-width="2"/><path d="M14 5c0-2 2-3 4-3" fill="none" stroke="#c9a05c"/></symbol>
<symbol id="p11" viewBox="0 0 20 20"><circle cx="10" cy="10" r="9" fill="#fff" stroke="#9fbcd8"/><circle cx="10" cy="10" r="7.500" fill="#8cb0d2"/><text x="10" y="15" text-anchor="middle" font-size="13" font-weight="700" fill="#fff" font-family="Liberation Sans">?</text></symbol>
<symbol id="p12" viewBox="0 0 20 20"><path d="M5 9V6a5 5 0 0 1 10 0v3" fill="none" stroke="#d8c8a8" stroke-width="2"/><rect x="3" y="9" width="14" height="10" fill="#e0c890"/></symbol>
<symbol id="p13" viewBox="0 0 20 20"><path d="M1 5c5-3 9 3 18 0M1 10c5-3 9 3 18 0M1 15c5-3 9 3 18 0" fill="none" stroke="#a9c4de" stroke-width="1.500"/></symbol>
<symbol id="p14" viewBox="0 0 20 20"><path d="M4 18V8a6 6 0 0 1 12 0v10l-3-2-3 2-3-2z" fill="#b8b8b8"/><circle cx="8" cy="8" r="1" fill="#fff"/><circle cx="12" cy="8" r="1" fill="#fff"/></symbol>
<symbol id="p15" viewBox="0 0 20 20"><path d="M3 6h14l-7 9z" fill="#e89c8c"/></symbol>
<symbol id="p16" viewBox="0 0 20 20"><path d="M3 15h14L10 6z" fill="#e89c8c"/></symbol>
<symbol id="p17" viewBox="0 0 20 20"><path d="M15 5H3v9h8" fill="none" stroke="#e89c8c" stroke-width="2.500"/><path d="M11 10l6 4-6 4zM15 5v8" fill="#e89c8c" stroke="#e89c8c"/></symbol>
<symbol id="p18" viewBox="0 0 20 20"><path d="M3 8l7-6 7 6zM3 12l7 6 7-6z" fill="#e89c8c"/><path d="M2 10h16" stroke="#e89c8c"/></symbol>
<symbol id="p19" viewBox="0 0 20 20"><path d="M1 6c4-3 8 1 12 0M1 10c4-3 8 1 12 0M1 14c4-3 8 1 10 0" fill="none" stroke="#9db3c9"/><use href="#cur"/></symbol>
<symbol id="p20" viewBox="0 0 20 20"><circle cx="8" cy="8" r="6.500" fill="none" stroke="#c8c8c8" stroke-width="1.500"/><rect x="8" y="9" width="10" height="10" fill="#f0f0f0" stroke="#e89c8c" stroke-width="1.500"/></symbol>
<symbol id="p21" viewBox="0 0 20 20"><path d="M1 19v-7h10v7M6 12v7" fill="none" stroke="#d8b888" stroke-width="1.300"/><path d="M12 2h7l-2 4h-3z" fill="#bbb"/><path d="M15 6h1.500v7H15z" fill="#bbb"/></symbol>
<symbol id="p22" viewBox="0 0 20 20"><path d="M2 2h13v4H2z" fill="#8a9aa8"/><path d="M5 6h7v3H5zM8 9h2v3H8z" fill="#999"/><path d="M1 18l4-4h7l4 4z" fill="#9db3c9"/><path d="M16 5h3l-1 4h-1z" fill="#bbb"/><path d="M17 9h1v9h-1z" fill="#e0c070"/></symbol>
<symbol id="p23" viewBox="0 0 20 20"><circle cx="7" cy="8" r="6" fill="#fff" stroke="#666" stroke-width="1.200"/><path d="M7 2a6 6 0 0 1 0 6H1a6 6 0 0 0 6 6V8z" fill="#666"/><path d="M18 2l1 1-8 12-2 1 0-2z" fill="#e0c070" stroke="#888" stroke-width=".5"/></symbol>
<symbol id="hex" viewBox="0 0 72 82"><path d="M36 0l36 20v41L36 82 0 61V20z" fill="#5b8fa8"/><path d="M36 0l-24 13c12 0 22 5 30 14l9-1c0-10 2-13 0-17z" fill="#7e9fb0"/><path d="M36 0l36 20v41l-9 5c6-16 2-34-12-57z" fill="#2f80ad"/><path d="M72 42v19L36 82l-22-13c16 6 40 2 58-27z" fill="#1f6f9e"/><path d="M0 20c14-6 28-4 40 5l-18 8c-10 6-14 16-8 36L0 61z" fill="#5c8ca5"/><path d="M36 24l17 9v19l-17 9-17-9V33z" fill="#3a3a3a"/><path d="M36 27l15 8-15 8-15-8z" fill="#5b93b5"/><path d="M21 35l15 8v17l-15-8z" fill="#4b87a8"/><path d="M51 35l-15 8v17l15-8z" fill="#1f6f9e"/></symbol>
<symbol id="axg" viewBox="0 0 60 60"><path d="M12 50V16" stroke="#1fa01f" stroke-width="1.500"/><path d="M12 14l2.500 12h-5z" fill="#10b010"/><path d="M12 50h34" stroke="#a00000" stroke-width="1.500"/><path d="M46 50l-10 3v-6z" fill="#8a0000"/><text x="12" y="12" text-anchor="middle" font-size="12" font-weight="700" fill="#00e000" font-family="Liberation Sans">Y</text><text x="55" y="55" text-anchor="middle" font-size="13" font-weight="700" fill="#f00000" font-family="Liberation Sans">X</text></symbol>
<symbol id="axr" viewBox="0 0 60 60"><path d="M12 50V16M12 50h34" stroke="#e00000" stroke-width="1.500"/><path d="M12 14l3 12h-6z" fill="#900000"/><path d="M46 50l-12 3v-6z" fill="#900000"/><text x="12" y="12" text-anchor="middle" font-size="13" font-weight="700" fill="#f00000" font-family="Liberation Sans">Y</text><text x="55" y="55" text-anchor="middle" font-size="13" font-weight="700" fill="#f00000" font-family="Liberation Sans">X</text></symbol>
</svg>

<header class="top">
  <div class="strip"><span class="progress"></span><span class="shade"></span></div>
  <div class="title">
    <svg class="logo" viewBox="0 0 18 18"><path d="M1 1l6 1 4 6 4-7 2 2-5 7 5 7-5 0-3-5-4 5-3-1 5-7z" fill="#2a2a2a"/><path d="M11 8l3 2-3 5-2-3z" fill="#e6c23a"/></svg>
    <span class="title-text">Mastercam 铣削 X9</span>
    <span class="minimize"></span>
  </div>
  <nav class="menu"><span>文件(F)</span><span>编辑(E)</span><span>视图(V)</span><span>分析(A)</span><span>绘图(C)</span><span>实体(S)</span><span>建模(P)</span><span>转换(X)</span><span>机床类型(M)</span><span>刀路(T)</span><span>屏幕(R)</span><span>MOLDPLUS</span><span>设置(I)</span><span>帮助(H)</span></nav>

  <div class="tb r1">
    <i class="grip w10"></i>
    <svg class="b"><use href="#new"/></svg><svg class="b"><use href="#open"/></svg><svg class="b"><use href="#save"/></svg><svg class="b"><use href="#saveas"/></svg><svg class="b"><use href="#savep"/></svg>
    <i class="grip w12"></i>
    <svg class="b"><use href="#undo"/></svg><svg class="b"><use href="#redo"/></svg>
    <i class="grip w12"></i>
    <svg class="b"><use href="#fit"/></svg><svg class="b"><use href="#paint"/></svg>
    <i class="sep w8"></i>
    <svg class="b"><use href="#zw"/></svg><svg class="b"><use href="#zs"/></svg><svg class="b"><use href="#zc"/></svg>
    <i class="sep w7"></i>
    <svg class="b"><use href="#zp"/></svg><svg class="b"><use href="#zo"/></svg>
    <i class="grip w11"></i>
    <svg class="b"><use href="#c1"/></svg><svg class="b"><use href="#c2"/></svg><svg class="b"><use href="#c3"/></svg><svg class="b"><use href="#c4"/></svg>
    <i class="grip w14"></i>
    <svg class="b"><use href="#cr"/></svg><i class="a"></i>
    <i class="grip w13"></i>
    <svg class="b"><use href="#glb"/></svg><i class="a"></i><svg class="b"><use href="#sph"/></svg><i class="a"></i>
    <i class="grip w10"></i>
    <svg class="b"><use href="#h1"/></svg><svg class="b"><use href="#h2"/></svg><svg class="b"><use href="#h3"/></svg>
    <i class="grip w13"></i>
    <svg class="b"><use href="#pen"/></svg><svg class="b"><use href="#pen2"/></svg><i class="a"></i>
    <i class="sep w9"></i>
    <svg class="b"><use href="#upen"/></svg><i class="a off"></i>
    <i class="grip w12"></i>
    <svg class="b"><use href="#m1"/></svg><svg class="b"><use href="#m2"/></svg><svg class="b"><use href="#m3"/></svg><svg class="b"><use href="#m4"/></svg><svg class="b"><use href="#m5"/></svg><svg class="b"><use href="#lst"/></svg>
    <i class="sep w8"></i>
    <svg class="b"><use href="#sig"/></svg><svg class="b"><use href="#vb"/></svg><i class="a"></i><svg class="b"><use href="#dts"/></svg><svg class="b"><use href="#ov"/></svg>
    <i class="sep w8"></i>
    <svg class="b"><use href="#colb"/></svg><svg class="b"><use href="#stk"/></svg><svg class="b"><use href="#n123"/></svg><svg class="b"><use href="#doc"/></svg><svg class="b"><use href="#chart"/></svg>
  </div>

  <div class="tb r2">
    <i class="grip w10"></i>
    <svg class="b"><use href="#pls"/></svg><i class="a"></i><svg class="b"><use href="#lin"/></svg><i class="a"></i><svg class="b"><use href="#cir"/></svg><i class="a"></i><svg class="b"><use href="#rct"/></svg><i class="a"></i><svg class="b"><use href="#fil"/></svg><i class="a"></i><svg class="b"><use href="#spl"/></svg><i class="a"></i><svg class="b"><use href="#srf"/></svg><i class="a"></i>
    <svg class="b e"><use href="#elogo"/></svg><svg class="b"><use href="#cw"/></svg>
    <i class="grip w12"></i>
    <svg class="b"><use href="#knf"/></svg><i class="w4"></i><svg class="b"><use href="#xln"/></svg><i class="a"></i>
    <i class="grip w9"></i>
    <svg class="b"><use href="#t1"/></svg><svg class="b"><use href="#t2"/></svg><svg class="b"><use href="#t3"/></svg><svg class="b"><use href="#t4"/></svg><svg class="b"><use href="#t5"/></svg>
    <i class="sep w10"></i>
    <svg class="b"><use href="#g1"/></svg><svg class="b"><use href="#g2"/></svg><svg class="b"><use href="#g3"/></svg><svg class="b"><use href="#g4"/></svg><svg class="b"><use href="#g5"/></svg>
    <i class="grip w11"></i>
    <svg class="b"><use href="#mm"/></svg><svg class="b"><use href="#a1"/></svg><svg class="b"><use href="#a2"/></svg><svg class="b"><use href="#a3"/></svg><svg class="b"><use href="#a4"/></svg><svg class="b"><use href="#a5"/></svg><i class="a"></i>
    <i class="sep w8"></i>
    <svg class="b"><use href="#b1"/></svg><svg class="b"><use href="#b2"/></svg><svg class="b"><use href="#b3"/></svg><svg class="b"><use href="#b4"/></svg><svg class="b"><use href="#b5"/></svg><svg class="b"><use href="#b6"/></svg><i class="a"></i>
    <i class="grip w12"></i>
    <svg class="b"><use href="#drl"/></svg><svg class="b"><use href="#fac"/></svg><svg class="b"><use href="#con"/></svg><svg class="b"><use href="#poc"/></svg><svg class="b"><use href="#spi"/></svg><i class="a"></i>
    <svg class="b"><use href="#k1"/></svg><svg class="b"><use href="#k2"/></svg><svg class="b"><use href="#k3"/></svg><svg class="b"><use href="#k4"/></svg><svg class="b"><use href="#k5"/></svg><svg class="b"><use href="#k6"/></svg><svg class="b"><use href="#k7"/></svg><svg class="b"><use href="#k8"/></svg>
  </div>

  <div class="tb r3">
    <i class="grip w10"></i>
    <span class="axis w37">X</span><span class="fld w146">-122.81197<i class="car"></i></span>
    <span class="axis w37">Y</span><span class="fld w145">65.15857<i class="car"></i></span>
    <span class="axis w38">Z</span><span class="fld w146">0.0<i class="car"></i></span>
    <i class="w2"></i>
    <svg class="b"><use href="#bolt"/></svg><svg class="b"><use href="#gear"/></svg><svg class="b"><use href="#xg"/></svg><i class="a off nar"></i><svg class="b"><use href="#hlp"/></svg>
    <i class="grip w16"></i>
    <svg class="b"><use href="#tn1"/></svg>
    <i class="sep w9"></i>
    <svg class="b"><use href="#tn2"/></svg>
    <i class="sep w7"></i>
    <svg class="b"><use href="#cyc"/></svg>
    <i class="sep w10"></i>
    <svg class="b"><use href="#tn3"/></svg><i class="a"></i>
    <i class="sep w7"></i>
    <svg class="b"><use href="#dsh"/></svg><i class="a"></i><svg class="b"><use href="#arw"/></svg><svg class="b"><use href="#tck"/></svg>
    <i class="sep w7"></i>
    <svg class="b"><use href="#q1"/></svg><svg class="b"><use href="#q2"/></svg><svg class="b"><use href="#q3"/></svg>
    <i class="sep w8"></i>
    <svg class="b"><use href="#q4"/></svg><svg class="b"><use href="#uar"/></svg>
    <i class="sep w10"></i>
    <svg class="b on"><use href="#tgt"/></svg><svg class="b"><use href="#clp"/></svg>
    <i class="sep w6"></i>
    <svg class="b"><use href="#no"/></svg><svg class="b"><use href="#ok"/></svg><svg class="b"><use href="#hlp"/></svg>
  </div>
  <div class="caption">功能状态栏</div>
</header>

<main class="main">
  <aside class="panel">
    <div class="phead">
      <span class="ptitle">刀路</span>
      <span class="pctl"><i class="pdrop"></i><svg class="ppin" viewBox="0 0 10 12"><path d="M3 1h4v5l1 1H2l1-1zM5 7v5" fill="none" stroke="#666"/></svg><i class="pclose">×</i></span>
    </div>
    <div class="ptb">
      <svg class="p"><use href="#p1"/></svg><svg class="p"><use href="#p2"/></svg><i class="sep w8"></i><svg class="p"><use href="#p3"/></svg><svg class="p"><use href="#p4"/></svg><i class="sep w8"></i><svg class="p"><use href="#p5"/></svg><svg class="p"><use href="#p6"/></svg><svg class="p"><use href="#p7"/></svg><svg class="p"><use href="#p8"/></svg><svg class="p"><use href="#p9"/></svg><i class="sep w8"></i><svg class="p"><use href="#p10"/></svg><i class="sep w8"></i><svg class="p"><use href="#p11"/></svg>
    </div>
    <div class="ptb">
      <svg class="p"><use href="#p12"/></svg><svg class="p"><use href="#p13"/></svg><svg class="p"><use href="#p14"/></svg><i class="sep w8"></i><svg class="p"><use href="#p15"/></svg><svg class="p"><use href="#p16"/></svg><svg class="p"><use href="#p17"/></svg><svg class="p"><use href="#p18"/></svg><i class="sep w8"></i><svg class="p"><use href="#p19"/></svg><svg class="p"><use href="#p20"/></svg><svg class="p"><use href="#p21"/></svg><i class="sep w8"></i><svg class="p"><use href="#p22"/></svg><svg class="p"><use href="#p23"/></svg>
    </div>
    <div class="tree">
      <div class="tree-rows">
        <div class="trow t0"><i class="exp minus"></i><i class="dot d6"></i><svg class="ti" viewBox="0 0 15 15"><rect x=".5" y=".5" width="14" height="14" fill="#00e5f0" stroke="#000080"/><path d="M7.500 0v15M0 7.500h15" stroke="#000080" stroke-width="1.500"/></svg><span class="tt">机床群组<span class="tm">-1</span></span></div>
        <div class="trow t1"><i class="exp"></i><i class="dot d7"></i><svg class="ti" viewBox="0 0 15 15"><path d="M1 13h13M3 13V7M7.500 13V2M12 13V7" stroke="#0000f0" stroke-width="2"/></svg><span class="tt">属性 <span class="tm">-</span> 西门子<span class="tm">3</span>轴</span></div>
        <div class="trow t1"><i class="exp minus"></i><i class="dot d7"></i><svg class="ti" viewBox="0 0 15 15"><g fill="#00d0f0" stroke="#000080"><circle cx="3.800" cy="3.800" r="3.200"/><circle cx="11.200" cy="3.800" r="3.200"/><circle cx="3.800" cy="11.200" r="3.200"/><circle cx="11.200" cy="11.200" r="3.200"/></g></svg><span class="tt sel tm">TP-1</span></div>
        <div class="trow t2"><i class="elbow"></i><svg class="flag" viewBox="0 0 15 15"><path d="M0 0h4v15H0z" fill="#8c0000"/><path d="M4 0l11 7.500L4 15z" fill="#f00000"/></svg></div>
      </div>
      <div class="hscroll"><i class="harrow">◂</i><i class="hthumb">|||</i><i class="htrack"></i><i class="harrow">▸</i></div>
    </div>
  </aside>

  <section class="viewport">
    <svg class="ax ax-tl"><use href="#axg"/></svg>
    <svg class="ax ax-tr"><use href="#axg"/></svg>
    <span class="ax-tool">刀</span>
    <svg class="ax ax-c"><use href="#axr"/></svg>
    <svg class="ax ax-bl"><use href="#axg"/></svg>
    <span class="viewname">俯视图</span>

    <div class="wm">
      <svg class="wm-hex"><use href="#hex"/></svg>
      <div class="wm-text"><span class="wm-big">3D世界网</span><span class="wm-url">WWW.3DSJW.COM</span></div>
    </div>
    <div class="scale"><span class="scale-a">16.375 mm</span><span class="scale-b">公制</span></div>

    <div class="dlg">
      <div class="dlg-title"><span>自定义</span><span class="dlg-x">×</span></div>
      <div class="dlg-work">
        <span class="lbl-work">工作区:</span>
        <span class="combo-work">*MCX9<i class="black-car"></i></span>
        <button class="btn">新建(N)</button><button class="btn">重命名(R)</button><button class="btn">复制(C)</button><button class="btn">删除(D)</button><button class="btn">重设(S)</button>
      </div>
      <div class="tabs"><span class="tab active">工具栏</span><span class="tab w58">下拉菜单</span><span class="tab w46">快捷键</span><span class="tab w44">选项</span></div>
      <div class="page">
        <div class="pcol">
          <div class="plabel">类别(A):</div>
          <div class="combo-cat"><span class="cat-val"><span class="en">2D </span>刀路</span><i class="car"></i></div>
          <div class="list">
            <div class="list-rows">
              <div class="lrow"><svg class="li"><use href="#drl"/></svg>钻孔刀路</div>
              <div class="lrow"><svg class="li"><use href="#con"/></svg>外形(C)</div>
              <div class="lrow"><svg class="li"><use href="#poc"/></svg><span class="en">2D</span>挖槽刀路</div>
              <div class="lrow"><svg class="li"><use href="#fac"/></svg>平面铣刀路</div>
              <div class="lrow"><svg class="li"><use href="#saw"/></svg>锯式刀路</div>
              <div class="lrow"><svg class="li"><use href="#dyn"/></svg><span class="en">2D </span>动态铣削刀路</div>
              <div class="lrow"><svg class="li"><use href="#dync"/></svg><span class="en">2D </span>动态外形刀路</div>
              <div class="lrow"><svg class="li"><use href="#poc"/></svg><span class="en">2D </span>区域铣削刀路</div>
              <div class="lrow"><svg class="li"><use href="#pee"/></svg><span class="en">2D </span>剥铣刀路</div>
              <div class="lrow"><svg class="li"><use href="#ble"/></svg><span class="en">2D </span>熔接铣削刀路</div>
              <div class="lrow"><svg class="li"><use href="#ful"/></svg>全圆铣削刀路</div>
              <div class="lrow"><svg class="li"><use href="#thr"/></svg>螺纹铣削刀路</div>
              <div class="lrow"><svg class="li"><use href="#slt"/></svg>铣键槽刀路</div>
            </div>
            <div class="sb"><i class="sb-up"></i><i class="sb-thumb h160"></i><i class="sb-track"></i><i class="sb-dn"></i></div>
          </div>
        </div>
        <div class="mid">
          <button class="btn off">增加 &gt;(B)</button>
          <button class="btn off">&lt; 移除(V)</button>
        </div>
        <div class="pcol">
          <div class="plabel hint">在工具栏列表中单击鼠标右键可显示更多选项。</div>
          <div class="plabel tlabel">工具栏(T):</div>
          <div class="list">
            <div class="tlist">
              <div class="cr"><i class="exp"></i><i class="dot d8"></i><i class="cb"></i><i class="dot d16"></i><span>*Moldplus</span></div>
              <div class="cr"><i class="exp"></i><i class="dot d8"></i><i class="cb"></i><i class="dot d16"></i><span>*Moldplus 5-axis Kit</span></div>
              <div class="cr"><i class="exp"></i><i class="dot d8"></i><i class="cb"></i><i class="dot d16"></i><span>*Moldplus Extras</span></div>
              <div class="cr"><i class="exp"></i><i class="dot d8"></i><i class="cb"></i><i class="dot d16"></i><span>*<span class="zh">修改</span></span></div>
              <div class="cr"><i class="exp"></i><i class="dot d8"></i><i class="cb"></i><i class="dot d16"></i><span>2D Highspeed Milling Toolpaths</span></div>
              <div class="cr"><i class="exp"></i><i class="dot d8"></i><i class="cb on"></i><i class="dot d16"></i><span>2D Toolpaths</span></div>
              <div class="cr"><i class="exp"></i><i class="dot d8"></i><i class="cb"></i><i class="dot d16"></i><span>ATP</span></div>
              <div class="cr"><i class="exp"></i><i class="dot d8"></i><i class="cb"></i><i class="dot d16"></i><span>CAxis Toolpaths</span></div>
              <div class="cr"><i class="exp"></i><i class="dot d8"></i><i class="cb on"></i><i class="dot d16"></i><span>C-planes</span></div>
              <div class="cr"><i class="exp"></i><i class="dot d8"></i><i class="cb on"></i><i class="dot d16"></i><span>Delete / Undelete</span></div>
              <div class="cr"><i class="exp"></i><i class="dot d8"></i><i class="cb"></i><i class="dot d16"></i><span>Drafting</span></div>
              <div class="cr"><i class="exp"></i><i class="dot d8"></i><i class="cb on"></i><i class="dot d16"></i><span class="hl">File</span></div>
              <div class="cr"><i class="exp"></i><i class="dot d8"></i><i class="cb on"></i><i class="dot d16"></i><span>Graphics Views</span></div>
              <div class="cr"><i class="exp"></i><i class="dot d8"></i><i class="cb"></i><i class="dot d16"></i><span>Lathe Toolpaths</span></div>
              <div class="cr"><i class="exp"></i><i class="dot d8"></i><i class="cb"></i><i class="dot d16"></i><span>Level 1 Mill Turn Milling</span></div>
              <div class="cr"><i class="exp"></i><i class="dot d8"></i><i class="cb"></i><i class="dot d16"></i><span>Level 2 Surface Finish Toolpaths</span></div>
              <div class="cr"><i class="exp"></i><i class="dot d8"></i><i class="cb"></i><i class="dot d16"></i><span>Level 2 Surface Rough Toolpaths</span></div>
              <div class="cr"><i class="exp"></i><i class="dot d8"></i><i class="cb"></i><i class="dot d16"></i><span>Machine Definition</span></div>
              <div class="cr"><i class="exp"></i><i class="dot d8"></i><i class="cb"></i><i class="dot d16"></i><span>Machine Simulation</span></div>
              <div class="cr"><i class="exp"></i><i class="dot d8"></i><i class="cb"></i><i class="dot d16"></i><span>Mill Turn Milling</span></div>
              <div class="cr"><i class="exp"></i><i class="dot d8"></i><i class="cb"></i><i class="dot d16"></i><span>Mill Turn Part Handling</span></div>
              <div class="cr"><i class="exp"></i><i class="dot d8"></i><i class="cb"></i><i class="dot d16"></i><span>Mill Turn Turning</span></div>
              <div class="cr"><i class="exp"></i><i class="dot d8"></i><i class="cb on"></i><i class="dot d16"></i><span>MPK Function P</span></div>
            </div>
            <div class="sb sb-r"><i class="sb-up"></i><i class="sb-thumb h156"></i><i class="sb-track"></i><i class="sb-dn"></i></div>
          </div>
        </div>
      </div>
      <div class="dlg-foot"><button class="btn def">确定</button><button class="btn">取消</button><button class="btn off">应用(A)</button><button class="btn">帮助</button></div>
    </div>
  </section>
</main>

<svg class="ink" viewBox="0 0 1859 988" xmlns="http://www.w3.org/2000/svg">
  <path d="M748 337L620 337L496 337Q470 333 450 327Q425 320 408 313Q394 303 389 293Q385 280 387 270Q391 260 399 253Q412 245 427 240Q460 235 496 233Q540 228 575 223Q640 220 700 220L940 220Q965 220 980 222Q1000 226 1018 233Q1038 241 1055 250Q1078 260 1092 270Q1097 282 1095 293Q1094 304 1088 312Q1072 322 1050 330Q1020 338 995 343Q975 350 957 352L830 352L697 350" class="ink-line"/>
  <path d="M641 246Q652 252 655 263Q657 276 655 287Q647 295 634 298Q600 301 566 300Q546 300 529 298Q511 294 496 288Q480 285 468 282Q459 277 457 270Q460 262 468 257Q492 252 520 250Q552 248 585 247Q615 245 641 246Z" class="ink-line"/>
</svg>
</body>
</html>
```
FILE: styles.css
```css
* { box-sizing: border-box; }
html, body { margin: 0; padding: 0; }
body {
  width: 1859px; height: 988px; overflow: hidden; position: relative;
  background: #f0f0f0; color: #222;
  font: 12px/1.2 "Noto Sans", "Noto Sans CJK SC", sans-serif;
  display: flex; flex-direction: column;
}
i, b { font-style: normal; font-weight: normal; display: block; }
.sprite { width: 0; height: 0; display: block; }

/* top chrome */
.top { height: 203px; flex: none; background: #f0f0f0; border-bottom: 3px solid #e6e6e6; }
.strip { height: 2px; background: #f7f7f7; display: flex; }
.progress { margin-left: 311px; width: 232px; background: linear-gradient(90deg, #0fd27a, #18d070 70%, #33c8e8); }
.shade { margin-left: 1053px; flex: 1; background: linear-gradient(#777, #ddd); }
.title { height: 20px; display: flex; align-items: center; margin-bottom: 2px; }
.logo { width: 18px; height: 18px; margin-left: 2px; }
.title-text { margin-left: 6px; color: #a4a4a4; font-size: 11.500px; }
.minimize { margin-left: auto; width: 7px; height: 2px; background: #aaa; margin-right: 3px; }
.menu { height: 22px; display: flex; align-items: center; gap: 15px; padding-left: 16px; color: #333; font-size: 11.500px; margin-bottom: 2px; }

.tb { display: flex; align-items: center; }
.r1 { height: 36px; }
.r2 { height: 38px; }
.r3 { height: 40px; }
.b { width: 33px; height: 26px; flex: none; display: block; }
.b.e { width: 28px; }
.b.on { background: #d8d8d8; height: 32px; }
.a { width: 22px; flex: none; height: 12px; display: flex; justify-content: center; align-items: center; }
.r2 .a { width: 22.400px; }
.a.nar { width: 20px; }
.a::before { content: ""; border: 5px solid transparent; border-top: 6px solid #777; border-bottom: 0; }
.a.off::before { border-top-color: #c4c4c4; }
.grip, .sep { align-self: stretch; flex: none; }
.grip { background: repeating-linear-gradient(#bdbdbd 0 2px, transparent 2px 4px) center / 2px 26px no-repeat; }
.sep { background: linear-gradient(#c6c6c6, #c6c6c6) center / 1px 34px no-repeat; }
.w2 { width: 2.500px; flex: none; }
.w4 { width: 4px; flex: none; }
.w6 { width: 6px; }
.w7 { width: 7px; }
.w8 { width: 8px; }
.w9 { width: 9px; }
.w10 { width: 10px; }
.w11 { width: 11px; }
.w12 { width: 12px; }
.w13 { width: 13px; }
.w14 { width: 14px; }
.w16 { width: 16px; }
.w37 { width: 37px; }
.w38 { width: 38px; }
.w145 { width: 145px; }
.w146 { width: 146px; }
.axis { font: 700 26px/1 "Liberation Sans", sans-serif; color: #808080; text-align: center; flex: none; }
.fld {
  height: 23px; flex: none; border: 1px solid #a9b0b8; display: flex; align-items: center; justify-content: space-between;
  padding: 0 6px 0 3px; color: #777; font-size: 12px;
}
.car { width: 0; height: 0; border: 3px solid transparent; border-top: 4px solid #b4b4b4; border-bottom: 0; flex: none; }
.caption { height: 36px; line-height: 36px; padding-left: 189px; font-size: 12px; color: #111; }

/* main */
.main { flex: 1; display: flex; min-height: 0; }
.panel { width: 361px; flex: none; display: flex; flex-direction: column; background: #f0f0f0; }
.phead { height: 35px; display: flex; align-items: center; justify-content: space-between; padding: 0 7px 0 3px; }
.ptitle { font-size: 20px; line-height: 1; color: #333; }
.pctl { display: flex; align-items: center; gap: 7px; color: #666; }
.pdrop { border: 5px solid transparent; border-top: 5px solid #777; border-bottom: 0; }
.ppin { width: 10px; height: 12px; display: block; }
.pclose { font: 17px/1 "Liberation Sans", sans-serif; color: #666; }
.ptb { height: 25px; display: flex; align-items: center; padding-left: 2px; }
.ptb .sep { background-size: 1px 24px; }
.p { width: 22px; height: 20px; flex: none; display: block; }
.tree { margin: 4px 6px 0 2px; flex: 1; min-height: 0; background: #fff; border: 1px solid #bdbdbd; border-bottom: 0; display: flex; flex-direction: column; }
.tree-rows { flex: 1; padding-top: 1px; font-size: 13px; color: #222; }
.trow { height: 16px; display: flex; align-items: center; }
.t0 { padding-left: 8px; }
.t1 { padding-left: 27px; background: repeating-linear-gradient(#333 0 1px, transparent 1px 2px) 31px 0 / 1px 100% no-repeat; }
.t2 { padding-left: 50px; }
.ti { width: 15px; height: 15px; flex: none; display: block; }
.tt { margin-left: 7px; line-height: 16px; }
.tm { font: 12px/16px "Liberation Mono", monospace; letter-spacing: -.7px; }
.sel { background: #e5e5e5; margin-left: 4px; padding: 0 3px; }
.elbow { width: 11px; height: 8px; align-self: flex-start; border-left: 1px dotted #333; border-bottom: 1px dotted #333; }
.flag { width: 15px; height: 15px; display: block; }
.exp { width: 9px; height: 9px; flex: none; border: 1px solid #8e8e8e; background: linear-gradient(#fff, #e0e0e0); position: relative; }
.exp::before { content: ""; position: absolute; left: 1px; top: 3px; width: 5px; height: 1px; background: #24408a; }
.exp::after { content: ""; position: absolute; left: 3px; top: 1px; width: 1px; height: 5px; background: #24408a; }
.exp.minus::after { display: none; }
.dot { height: 1px; flex: none; background: repeating-linear-gradient(90deg, #444 0 1px, transparent 1px 2px); }
.d6 { width: 6px; }
.d7 { width: 7px; }
.d8 { width: 8px; }
.d16 { width: 16px; margin-right: 6px; }
.hscroll { height: 13px; flex: none; display: flex; padding-left: 2px; background: #f0f0f0; color: #555; font-size: 9px; line-height: 12px; text-align: center; margin-right: 2px; }
.harrow { width: 16px; border: 1px solid #bbb; background: linear-gradient(#fff, #ddd); }
.hthumb { width: 239px; margin-left: 1px; border: 1px solid #aaa; background: linear-gradient(#f4f4f4, #c8c8c8); letter-spacing: 1px; }
.htrack { flex: 1; }

/* viewport */
.viewport { flex: 1; position: relative; overflow: hidden; background: #3c3c3c; border-bottom: 2px solid #e4e4e4; }
.ax { position: absolute; width: 60px; height: 60px; display: block; }
.ax-tl { left: 44px; top: 5px; }
.ax-tr { left: 1450px; top: 5px; }
.ax-c { left: 747px; top: 341px; }
.ax-bl { left: 43px; top: 678px; }
.ax-tool { position: absolute; left: 1458px; top: 56px; color: #fff; font-size: 12px; }
.viewname { position: absolute; left: 20px; top: 761px; color: #fff; font-weight: 700; font-size: 13px; }
.wm { position: absolute; left: 1215px; top: 690px; display: flex; gap: 9px; }
.wm-hex { width: 72px; height: 82px; display: block; }
.wm-text { display: flex; flex-direction: column; padding-top: 6px; }
.wm-big { font: 700 40px/44px "Liberation Sans", "Noto Sans CJK SC", sans-serif; color: #8c8c8c; letter-spacing: 1.500px; }
.wm-url { font: 700 15.500px/16px "Liberation Sans", sans-serif; color: #6e6e6e; letter-spacing: 3.600px; margin-top: 6px; white-space: nowrap; }
.scale { position: absolute; left: 1398px; top: 749px; width: 98px; height: 24px; border: solid #fff; border-width: 0 1px; color: #fff; font-weight: 700; text-align: center; display: flex; flex-direction: column; }
.scale-a { height: 13px; border-bottom: 1px solid #fff; font: 700 11px/11px "Liberation Sans", sans-serif; letter-spacing: .3px; }
.scale-b { font-size: 12px; line-height: 14px; }

/* dialog */
.dlg { position: absolute; left: 22px; top: 27px; width: 723px; height: 594px; background: #fafafa; font: 12px/1.2 "Liberation Mono", "Noto Sans CJK SC", monospace; color: #222; }
.dlg-title { height: 29px; background: #f0f0f0; display: flex; align-items: center; justify-content: space-between; padding: 6px 14px 0 12px; font-family: "Noto Sans CJK SC", sans-serif; }
.dlg-x { font: 16px/1 "Liberation Sans", sans-serif; color: #666; }
.dlg-work { height: 41px; display: flex; align-items: flex-start; padding: 7px 0 0 18px; gap: 6px; }
.lbl-work { width: 73px; line-height: 20px; }
.combo-work { width: 171px; height: 18px; margin-top: 1px; margin-right: 4px; border: 1px solid #6e6e6e; border-radius: 2px; background: linear-gradient(#f4f4f4, #cfcfcf); display: flex; align-items: center; justify-content: space-between; padding: 0 5px 0 3px; font-size: 11px; }
.black-car { border: 4px solid transparent; border-top: 5px solid #111; border-bottom: 0; }
.btn { width: 75px; height: 20px; flex: none; padding: 1px 0 0; background: #fafafa; border: 1px solid #c8c8c8; font: 12px/1 "Liberation Mono", "Noto Sans CJK SC", monospace; color: #222; }
.btn.off { color: #bdbdbd; }
.btn.def { border-color: #4c4c4c; background: #fff; }
.tabs { height: 20px; background: #f0f0f0; padding-left: 13px; display: flex; align-items: flex-end; position: relative; }
.tab { height: 17px; background: linear-gradient(#f0f0f0, #c8c8c8); border: 1px solid #b4b4b4; border-bottom: 0; text-align: center; line-height: 17px; font-family: "Noto Sans CJK SC", sans-serif; }
.tab.active { width: 52px; height: 21px; margin-bottom: -1px; background: #fafafa; border-color: #a8a8a8; position: relative; z-index: 1; line-height: 18px; }
.w58 { width: 59px; }
.w46 { width: 47px; }
.w44 { width: 44px; }
.page { margin: 0 15px 0 13px; height: 454px; border: 1px solid #8e949c; padding: 10px 13px 0; display: grid; grid-template-columns: 281px 106px 281px; }
.pcol { display: flex; flex-direction: column; min-width: 0; }
.plabel { height: 20px; line-height: 18px; font-family: "Noto Sans CJK SC", sans-serif; }
.hint { white-space: nowrap; line-height: 16px; }
.tlabel { margin-top: 10px; margin-bottom: 18px; }
.combo-cat { height: 20px; width: 177px; margin: 10px 0 18px; border: 1px solid #c4c4c4; background: #fafafa; display: flex; align-items: center; padding-right: 6px; gap: 5px; font-family: "Noto Sans CJK SC", sans-serif; }
.cat-val { flex: 1; background: #e3e3e3; height: 18px; line-height: 17px; padding: 0 2px; }
.list { height: 363px; background: #fff; border: 1px solid #bdbdbd; display: flex; overflow: hidden; padding: 1px 1px 0 0; }
.list-rows { flex: 1; min-width: 0; overflow: hidden; font-family: "Noto Sans CJK SC", sans-serif; }
.lrow { height: 28px; display: flex; align-items: center; padding-left: 8px; white-space: pre; flex: none; }
.li { width: 24px; height: 24px; margin-right: 3px; flex: none; display: block; }
.en { font: 11px/16px "Liberation Mono", monospace; letter-spacing: -.6px; white-space: pre; }
.sb { width: 16px; flex: none; background: #f0f0f0; display: flex; flex-direction: column; margin-right: 1px; }
.sb-r { margin-right: 2px; }
.sb-up, .sb-dn { height: 19px; flex: none; display: flex; align-items: center; justify-content: center; }
.sb-up::before { content: ""; border: 4px solid transparent; border-bottom: 4px solid #555; border-top: 0; }
.sb-dn::before { content: ""; border: 4px solid transparent; border-top: 4px solid #555; border-bottom: 0; }
.sb-thumb { flex: none; border: 1px solid #b8b8b8; border-radius: 2px; background: linear-gradient(90deg, #fafafa, #c4c4c4); position: relative; }
.sb-thumb::after { content: ""; position: absolute; left: 4px; right: 4px; top: calc(50% - 4px); height: 8px; background: repeating-linear-gradient(#666 0 1px, transparent 1px 3px); }
.h160 { height: 160px; }
.h156 { height: 156px; }
.sb-track { flex: 1; }
.mid { display: flex; flex-direction: column; gap: 7px; padding: 182px 0 0 16px; }
.mid .btn { height: 21px; font-size: 12px; }
.tlist { flex: 1; min-width: 0; overflow: hidden; font: 11px/16px "Liberation Mono", "Noto Sans CJK SC", monospace; letter-spacing: -.6px; }
.cr { height: 16px; display: flex; align-items: center; padding-left: 8px; white-space: pre; background: repeating-linear-gradient(#333 0 1px, transparent 1px 2px) 12px 0 / 1px 100% no-repeat; }
.cr .exp { background-color: #eee; }
.cb { width: 13px; height: 13px; flex: none; border: 1px solid #a4a4a4; background: #fff; position: relative; }
.cb.on::after { content: ""; position: absolute; left: 4px; top: 1px; width: 4px; height: 8px; border: solid #777; border-width: 0 2px 2px 0; transform: rotate(35deg); }
.zh { font-size: 12px; letter-spacing: 0; }
.hl { background: #e5e5e5; margin-left: -2px; padding: 0 2px; }
.dlg-foot { display: flex; justify-content: flex-end; gap: 6px; padding: 17px 13px 0 0; }
.dlg-foot .btn { height: 21px; }

/* red marker scribbles over the screenshot */
.ink { position: absolute; left: 0; top: 0; width: 1859px; height: 988px; pointer-events: none; }
.ink-line { fill: none; stroke: #ff3c3c; stroke-width: 7; stroke-linecap: round; stroke-linejoin: round; }
```
